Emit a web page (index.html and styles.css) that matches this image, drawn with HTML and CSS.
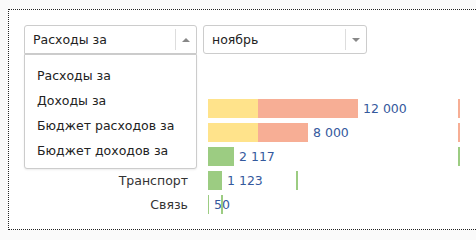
FILE: index.html
```html
<!DOCTYPE html>
<html lang="ru">
<head>
<meta charset="utf-8">
<link rel="stylesheet" href="styles.css">
</head>
<body>
<div class="panel">
  <div class="controls">
    <div class="select select-open select-type">
      <span class="select-value">Расходы за</span>
      <span class="select-sep"></span>
      <span class="select-arrow arrow-up"></span>
      <ul class="dropdown">
        <li>Расходы за</li>
        <li>Доходы за</li>
        <li>Бюджет расходов за</li>
        <li>Бюджет доходов за</li>
      </ul>
    </div>
    <div class="select select-month">
      <span class="select-value">ноябрь</span>
      <span class="select-sep"></span>
      <span class="select-arrow arrow-down"></span>
    </div>
  </div>
  <div class="chart">
    <div class="row">
      <div class="label"></div>
      <div class="track">
        <span class="seg seg-budget" style="width:50px"></span>
        <span class="seg seg-over" style="width:100px"></span>
        <span class="value">12 000</span>
        <span class="marker marker-over" style="left:250px"></span>
      </div>
    </div>
    <div class="row">
      <div class="label"></div>
      <div class="track">
        <span class="seg seg-budget" style="width:50px"></span>
        <span class="seg seg-over" style="width:50px"></span>
        <span class="value">8 000</span>
        <span class="marker marker-over" style="left:250px"></span>
      </div>
    </div>
    <div class="row">
      <div class="label"></div>
      <div class="track">
        <span class="seg seg-ok" style="width:26px"></span>
        <span class="value">2 117</span>
        <span class="marker marker-ok" style="left:250px"></span>
      </div>
    </div>
    <div class="row">
      <div class="label">Транспорт</div>
      <div class="track">
        <span class="seg seg-ok" style="width:14px"></span>
        <span class="value">1 123</span>
        <span class="marker marker-ok" style="left:88px"></span>
      </div>
    </div>
    <div class="row">
      <div class="label">Связь</div>
      <div class="track">
        <span class="seg seg-ok" style="width:1px"></span>
        <span class="value">50</span>
        <span class="marker marker-ok" style="left:13px"></span>
      </div>
    </div>
  </div>
</div>
</body>
</html>
```
FILE: styles.css
```css
html, body {
  margin: 0;
  padding: 0;
  overflow: hidden;
}
body {
  background: #fafafa;
  font-family: "DejaVu Sans", Verdana, sans-serif;
  font-size: 12.5px;
  color: #333;
}
.panel {
  margin: 9px 0 0 8px;
  width: 500px;
  border: 1px dotted #222;
  border-right: none;
  background: #fff;
  padding: 15px 0 0 15px;
  box-sizing: border-box;
  height: 221px;
}
.controls {
  display: flex;
  gap: 6px;
  height: 29px;
}
.select {
  position: relative;
  display: flex;
  align-items: center;
  height: 29px;
  box-sizing: border-box;
  border: 1px solid #ccc;
  border-radius: 3px;
  background: #fff;
  color: #222;
}
.select-type { width: 173px; }
.select-month { width: 164px; }
.select-open {
  border-radius: 3px 3px 0 0;
}
.select-value {
  flex: 1;
  padding-left: 8px;
  white-space: nowrap;
}
.select-sep {
  width: 1px;
  height: 21px;
  background: #ddd;
}
.select-arrow {
  width: 20px;
  display: flex;
  justify-content: center;
}
.select-arrow::before {
  content: "";
  border-left: 4px solid transparent;
  border-right: 4px solid transparent;
}
.arrow-up::before { border-bottom: 4px solid #888; }
.arrow-down::before { border-top: 4px solid #888; }
.dropdown {
  position: absolute;
  z-index: 2;
  left: -1px;
  top: 28px;
  width: 173px;
  box-sizing: border-box;
  margin: 0;
  padding: 8px 0 5px;
  list-style: none;
  background: #fff;
  border: 1px solid #ccc;
  border-radius: 0 0 3px 3px;
  box-shadow: 0 1px 2px rgba(0,0,0,0.08);
}
.dropdown li {
  height: 25px;
  line-height: 25px;
  padding-left: 12px;
  white-space: nowrap;
}
.chart {
  margin-top: 45px;
  display: flex;
  flex-direction: column;
  gap: 5px;
}
.row {
  display: flex;
  gap: 20px;
  height: 19px;
  align-items: center;
}
.label {
  width: 164px;
  text-align: right;
  white-space: nowrap;
  color: #333;
}
.track {
  position: relative;
  display: flex;
  align-items: center;
  height: 19px;
}
.seg {
  height: 19px;
}
.seg-budget { background: #ffe38b; }
.seg-over { background: #f7ae95; }
.seg-ok { background: #9ccc82; }
.value {
  margin-left: 5px;
  color: #35599d;
  white-space: nowrap;
}
.marker {
  position: absolute;
  top: 0;
  width: 2px;
  height: 19px;
}
.marker-over { background: #f7ae95; }
.marker-ok { background: #9ccc82; }
```
